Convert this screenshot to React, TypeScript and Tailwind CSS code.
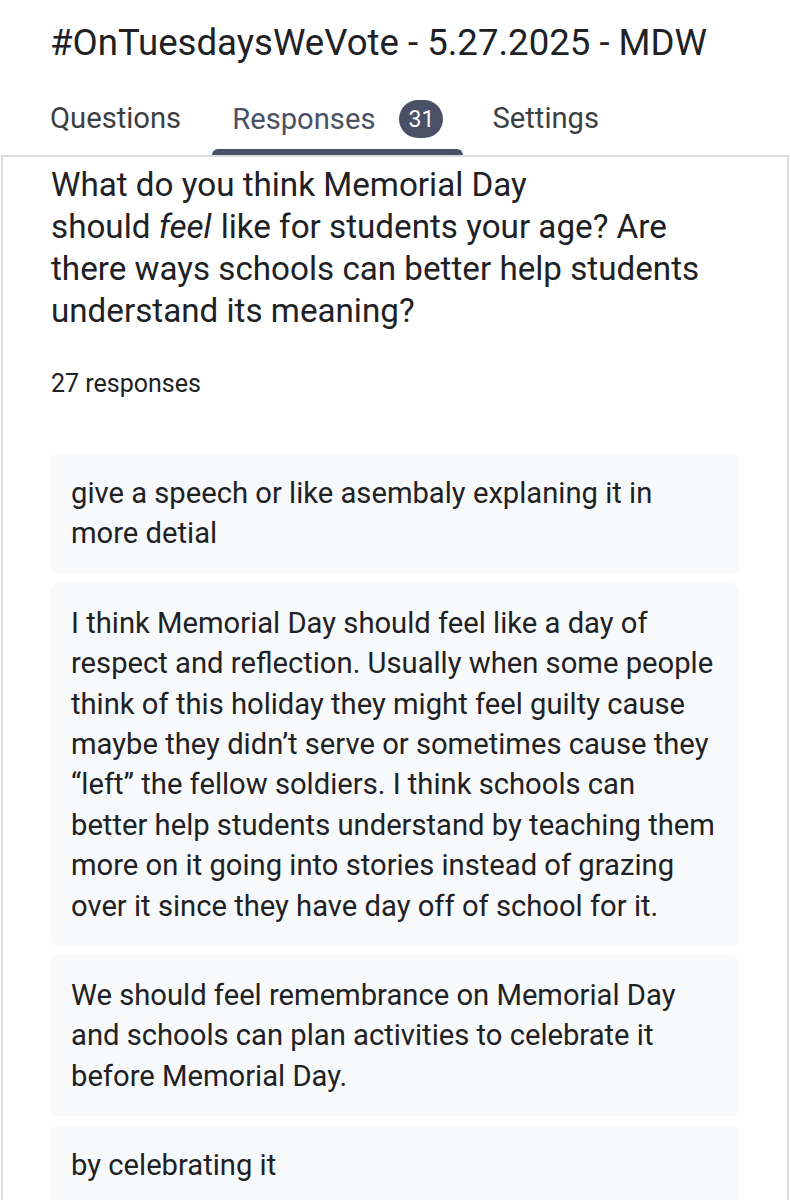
const responses = [
    "give a speech or like asembaly explaning it in more detial",
    "I think Memorial Day should feel like a day of respect and reflection. Usually when some people think of this holiday they might feel guilty cause maybe they didn’t serve or sometimes cause they “left” the fellow soldiers. I think schools can better help students understand by teaching them more on it going into stories instead of grazing over it since they have day off of school for it.",
    "We should feel remembrance on Memorial Day and schools can plan activities to celebrate it before Memorial Day.",
    "by celebrating it"
]

export default function App() {
    return (
        <div className="h-[1200px] w-[790px] overflow-hidden bg-white font-['Roboto',sans-serif] text-[#202124]">
            <h1 className="whitespace-nowrap px-[50px] pt-[21px] text-[36.6px] leading-[44px]">
                #OnTuesdaysWeVote - 5.27.2025 - MDW
            </h1>

            <nav className="mt-[33px] flex items-end px-[50px] text-[29.2px] leading-[40px] text-[#3c4043]">
                <span className="pb-[17px]">Questions</span>
                <div className="ml-[31px] flex flex-col">
                    <div className="flex items-center gap-[24px] px-[20px] pb-[10px]">
                        <span className="text-[#4a5066]">Responses</span>
                        <span className="flex h-[38px] w-[44px] items-center justify-center rounded-full bg-[#4a5066] text-[23px] leading-none text-white">
                            31
                        </span>
                    </div>
                    <div className="h-[6px] w-full rounded-t-[6px] bg-[#4a5066]" />
                </div>
                <span className="ml-[29px] pb-[17px]">Settings</span>
            </nav>

            <section className="mx-[1px] border-x-2 border-t-2 border-[#dadce0] pl-[48px] pr-[40px] pt-[7px]">
                <p className="text-[33.2px] leading-[42px]">
                    What do you think Memorial Day
                    <br />
                    should <em className="pr-[1px]">feel</em> like for students your age? Are there ways schools can
                    better help students understand its meaning?
                </p>
                <p className="mt-[37px] text-[25px] leading-[30px]">27 responses</p>

                <div className="mt-[54px] flex flex-col gap-[9px]">
                    {responses.map((text, i) => (
                        <div
                            key={i}
                            className="w-[688px] rounded-[8px] bg-[#f8f9fa] py-[20px] pl-[20px] pr-[24px] text-[29.2px] leading-[40.4px]"
                        >
                            {text}
                        </div>
                    ))}
                </div>
            </section>
        </div>
    )
}
